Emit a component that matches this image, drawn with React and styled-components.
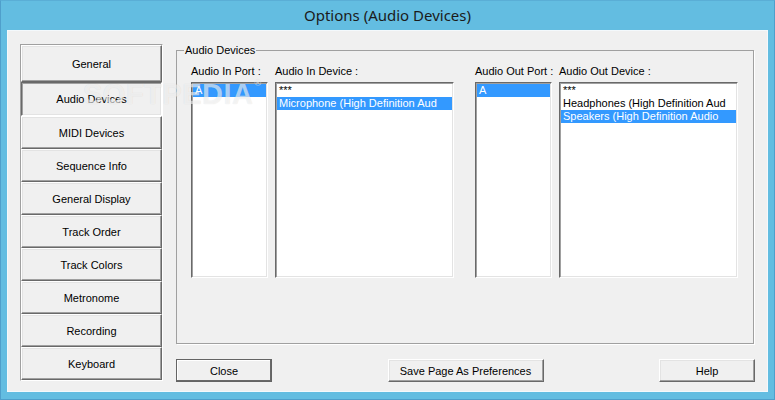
import styled, { createGlobalStyle, css } from 'styled-components';

const GlobalStyle = createGlobalStyle`
  html, body {
    margin: 0;
    padding: 0;
  }
  body {
    background: #63bde1;
    font-family: "Liberation Sans", Arial, sans-serif;
  }
`;

const raised = css`
  border: 1px solid;
  border-color: #fff #696969 #696969 #fff;
  box-shadow: inset -1px -1px #a0a0a0, inset 1px 1px #e3e3e3;
`;

const sunken = css`
  border: 1px solid;
  border-color: #696969 #fff #fff #696969;
  box-shadow: inset 1px 1px #a0a0a0, inset -1px -1px #e3e3e3;
`;

const Window = styled.div`
  position: relative;
  width: 775px;
  height: 400px;
  box-sizing: border-box;
  border: 1px solid #4f9fcb;
  border-top-color: #5aaed6;
  padding: 0 6px 7px;
  display: flex;
  flex-direction: column;
  background: #63bde1;
`;

const TitleBar = styled.div`
  height: 29px;
  display: flex;
  align-items: center;
  justify-content: center;
  font-family: "Noto Sans", "Open Sans", sans-serif;
  font-size: 15px;
  color: #1b1b1b;
  padding-bottom: 1px;
`;

const Client = styled.div`
  flex: 1;
  border: 1px solid #f4f9fc;
  background: #f0f0f0;
  padding: 13px 12px 9px;
  display: grid;
  grid-template-columns: 143px 1fr;
  column-gap: 13px;
  font-size: 11px;
  color: #000;
`;

const TabGroup = styled.div`
  align-self: start;
  display: flex;
  flex-direction: column;
  border: 1px solid;
  border-color: #a0a0a0 #fff #fff #a0a0a0;
`;

const TabButton = styled.div`
  box-sizing: border-box;
  height: ${p => p.$h || 33}px;
  display: flex;
  align-items: center;
  justify-content: center;
  background: #f0f0f0;
  ${p => (p.$active ? sunken : raised)}
`;

const RightCol = styled.div`
  display: flex;
  flex-direction: column;
`;

const Group = styled.fieldset`
  box-sizing: border-box;
  height: 300px;
  margin: 0 1px 0 0;
  padding: 0;
  border: 1px solid #a0a0a0;
  box-shadow: 1px 1px #fff;
`;

const Legend = styled.legend`
  margin-left: 7px;
  padding: 0 1px;
  line-height: 13px;
`;

const Columns = styled.div`
  display: flex;
  gap: 21px;
  padding: 8px 0 0 14px;
`;

const Pair = styled.div`
  display: flex;
  gap: 7px;
`;

const Column = styled.div`
  display: flex;
  flex-direction: column;
  width: ${p => p.$w}px;
`;

const Label = styled.div`
  line-height: 13px;
  margin-bottom: 4px;
  white-space: nowrap;
`;

const ListBox = styled.div`
  box-sizing: border-box;
  height: 196px;
  background: #fff;
  padding: 1px;
  overflow: hidden;
  ${sunken}
`;

const Item = styled.div`
  height: 13px;
  line-height: 13px;
  padding-left: 2px;
  white-space: nowrap;
  background: ${p => (p.$sel ? '#3399ff' : 'transparent')};
  color: ${p => (p.$sel ? '#fff' : '#000')};
`;

const ButtonRow = styled.div`
  margin-top: 15px;
  display: flex;
  justify-content: space-between;
`;

const Button = styled.div`
  box-sizing: border-box;
  width: ${p => p.$w}px;
  height: 23px;
  display: flex;
  align-items: center;
  justify-content: center;
  background: #f0f0f0;
  ${raised}
  ${p =>
    p.$default &&
    css`
      border-color: #646464;
      box-shadow: inset -1px -1px #696969, inset 1px 1px #fff;
    `}
`;

const Watermark = styled.div`
  position: absolute;
  left: 82px;
  top: 77px;
  font-family: "Liberation Sans", Arial, sans-serif;
  font-weight: bold;
  font-size: 29px;
  letter-spacing: 0.5px;
  color: rgba(255, 255, 255, 0.6);
  text-shadow: 0 0 1px rgba(0, 0, 0, 0.12);
  pointer-events: none;
  sup {
    font-size: 9px;
    vertical-align: top;
    margin-left: 1px;
  }
`;

const tabs = [
  'General',
  'Audio Devices',
  'MIDI Devices',
  'Sequence Info',
  'General Display',
  'Track Order',
  'Track Colors',
  'Metronome',
  'Recording',
  'Keyboard',
];

const heights = { General: 37, 'Audio Devices': 34 };

const ListColumn = ({ label, width, items, selected }) => (
  <Column $w={width}>
    <Label>{label}</Label>
    <ListBox>
      {items.map((it, i) => (
        <Item key={i} $sel={i === selected}>{it}</Item>
      ))}
    </ListBox>
  </Column>
);

const App = () => {
  return (
    <Window>
      <GlobalStyle />
      <TitleBar>Options (Audio Devices)</TitleBar>
      <Client>
        <TabGroup>
          {tabs.map(t => (
            <TabButton key={t} $h={heights[t]} $active={t === 'Audio Devices'}>
              {t}
            </TabButton>
          ))}
        </TabGroup>
        <RightCol>
          <Group>
            <Legend>Audio Devices</Legend>
            <Columns>
              <Pair>
                <ListColumn label="Audio In Port :" width={77} items={['A']} selected={0} />
                <ListColumn
                  label="Audio In Device :"
                  width={179}
                  items={['***', 'Microphone (High Definition Aud']}
                  selected={1}
                />
              </Pair>
              <Pair>
                <ListColumn label="Audio Out Port :" width={77} items={['A']} selected={0} />
                <ListColumn
                  label="Audio Out Device :"
                  width={179}
                  items={['***', 'Headphones (High Definition Aud', 'Speakers (High Definition Audio']}
                  selected={2}
                />
              </Pair>
            </Columns>
          </Group>
          <ButtonRow>
            <Button $w={96} $default>Close</Button>
            <Button $w={156}>Save Page As Preferences</Button>
            <Button $w={96}>Help</Button>
          </ButtonRow>
        </RightCol>
      </Client>
      <Watermark>
        SOFTPEDIA<sup>®</sup>
      </Watermark>
    </Window>
  );
};

export default App;
